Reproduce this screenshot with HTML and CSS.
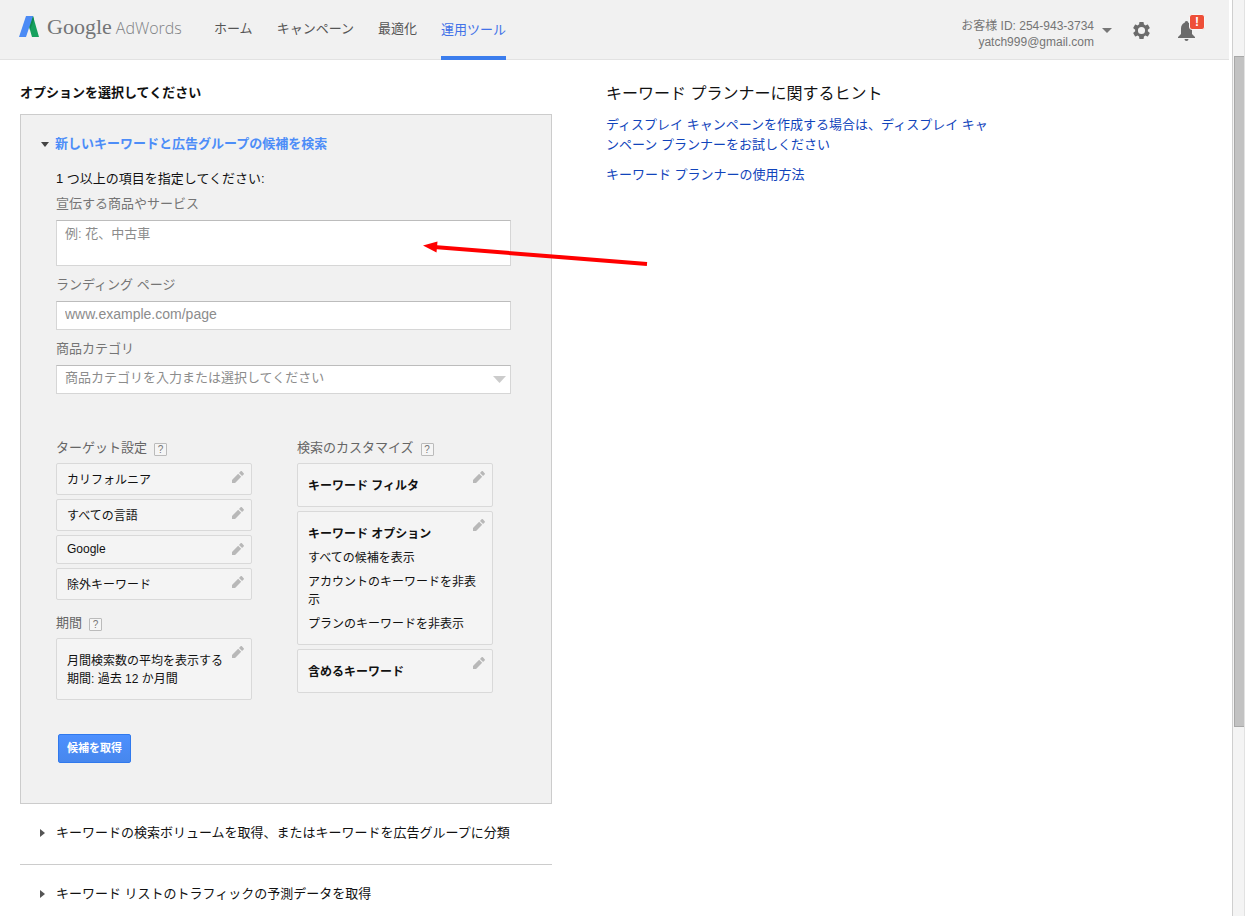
FILE: index.html
```html
<!DOCTYPE html>
<html lang="ja">
<head>
<meta charset="utf-8">
<meta name="viewport" content="width=device-width, initial-scale=1">
<title>Google AdWords</title>
<link rel="stylesheet" href="styles.css">
</head>
<body>
<svg class="sprite" aria-hidden="true">
  <symbol id="pencil" viewBox="0 0 18 18">
    <path d="M0 13.400V18h4.600L13.800 8.800 9.200 4.200zM17.500 5.100c.6-.6.6-1.300 0-1.900L14.800.5c-.6-.6-1.300-.6-1.900 0L10.500 2.900l4.600 4.600z"/>
  </symbol>
</svg>
<div class="shell">
  <div class="page">
    <header class="header">
      <a class="logo" href="#" aria-label="Google AdWords">
        <svg class="logo-mark" viewBox="0 0 20 21" aria-hidden="true">
          <path fill="#16a05d" d="M7 0h7l6 21h-7z"/>
          <path fill="#0f8a4d" d="M10.500 11 14 0l1 4-4 10z"/>
          <path fill="#4c8bf5" d="M7 0h7L7 21H0z"/>
        </svg>
        <span class="logo-google">Google</span>
        <span class="logo-product">AdWords</span>
      </a>
      <nav class="nav">
        <a href="#">ホーム</a>
        <a href="#">キャンペーン</a>
        <a href="#">最適化</a>
        <a class="active" href="#" aria-current="page">運用ツール</a>
      </nav>
      <div class="tools">
        <button class="account" type="button">
          <span class="account-text">
            <span>お客様 ID: 254-943-3734</span>
            <span>yatch999@gmail.com</span>
          </span>
          <svg class="account-caret" viewBox="0 0 10 5" aria-hidden="true"><path d="M0 0h10L5 5z"/></svg>
        </button>
        <button class="icon-button" type="button" aria-label="設定">
          <svg class="gear" viewBox="2 2 20 20" aria-hidden="true"><path fill-rule="evenodd" d="M19.430 12.980c.04-.32.070-.64.070-.98s-.03-.66-.07-.98l2.110-1.650c.19-.15.240-.42.120-.64l-2-3.460c-.12-.22-.39-.3-.61-.22l-2.490 1c-.52-.4-1.080-.73-1.690-.98l-.38-2.650A.488.488 0 0 0 14 2h-4c-.25 0-.46.180-.49.420l-.38 2.650c-.61.250-1.170.590-1.690.980l-2.490-1c-.23-.09-.49 0-.61.220l-2 3.460c-.13.220-.07.490.120.640l2.110 1.650c-.04.320-.07.650-.07.980s.03.660.070.980l-2.110 1.650c-.19.150-.24.420-.12.640l2 3.460c.12.220.39.300.610.220l2.490-1c.52.400 1.080.730 1.690.980l.38 2.650c.03.240.240.420.490.420h4c.25 0 .46-.18.490-.42l.38-2.650c.61-.25 1.170-.59 1.690-.98l2.490 1c.23.090.490 0 .61-.22l2-3.460c.12-.22.070-.49-.12-.64zM12 16.200a4.200 4.200 0 1 1 0-8.400 4.200 4.200 0 0 1 0 8.400z"/></svg>
        </button>
        <button class="icon-button" type="button" aria-label="通知">
          <svg class="bell" viewBox="0 0 17 20" aria-hidden="true"><path d="M8.500 0C7.400 0 6.700.7 6.700 1.800 4.300 2.600 3 4.800 3 7.500V13L0 16v1h17v-1l-3-3V7.500c0-2.700-1.300-4.900-3.700-5.700C10.300.7 9.600 0 8.500 0zM6.500 18a2 2 0 0 0 4 0z"/></svg>
          <span class="badge">!</span>
        </button>
      </div>
    </header>

    <main class="content">
      <section class="options">
        <h1 class="section-title">オプションを選択してください</h1>
        <form class="panel">
          <h2 class="panel-title">
            <button type="button" aria-expanded="true">
              <svg class="caret-down" viewBox="0 0 8 5" aria-hidden="true"><path d="M0 0h8L4 5z"/></svg>新しいキーワードと広告グループの候補を検索
            </button>
          </h2>
          <p class="lead">1 つ以上の項目を指定してください:</p>
          <div class="field">
            <label for="product">宣伝する商品やサービス</label>
            <textarea id="product" placeholder="例: 花、中古車"></textarea>
          </div>
          <div class="field">
            <label for="landing">ランディング ページ</label>
            <input id="landing" type="text" placeholder="www.example.com/page">
          </div>
          <div class="field">
            <label for="category">商品カテゴリ</label>
            <div class="select-wrap">
              <select id="category"><option>商品カテゴリを入力または選択してください</option></select>
              <svg class="select-caret" viewBox="0 0 13 7" aria-hidden="true"><path d="M0 0h13L6.500 7z"/></svg>
            </div>
          </div>

          <div class="settings">
            <div class="settings-column">
              <section class="group">
                <h3 class="group-title">ターゲット設定 <button class="help" type="button">?</button></h3>
                <div class="card">カリフォルニア<button class="edit" type="button" aria-label="編集"><svg aria-hidden="true"><use href="#pencil"/></svg></button></div>
                <div class="card">すべての言語<button class="edit" type="button" aria-label="編集"><svg aria-hidden="true"><use href="#pencil"/></svg></button></div>
                <div class="card card-latin">Google<button class="edit" type="button" aria-label="編集"><svg aria-hidden="true"><use href="#pencil"/></svg></button></div>
                <div class="card">除外キーワード<button class="edit" type="button" aria-label="編集"><svg aria-hidden="true"><use href="#pencil"/></svg></button></div>
              </section>
              <section class="group">
                <h3 class="group-title">期間 <button class="help" type="button">?</button></h3>
                <div class="card card-tall">
                  <p>月間検索数の平均を表示する<br>期間: 過去 12 か月間</p>
                  <button class="edit" type="button" aria-label="編集"><svg aria-hidden="true"><use href="#pencil"/></svg></button>
                </div>
              </section>
            </div>
            <div class="settings-column">
              <section class="group">
                <h3 class="group-title">検索のカスタマイズ <button class="help" type="button">?</button></h3>
                <div class="card card-tall">
                  <h4>キーワード フィルタ</h4>
                  <button class="edit" type="button" aria-label="編集"><svg aria-hidden="true"><use href="#pencil"/></svg></button>
                </div>
                <div class="card card-tall">
                  <h4>キーワード オプション</h4>
                  <p>すべての候補を表示</p>
                  <p>アカウントのキーワードを非表示</p>
                  <p>プランのキーワードを非表示</p>
                  <button class="edit" type="button" aria-label="編集"><svg aria-hidden="true"><use href="#pencil"/></svg></button>
                </div>
                <div class="card card-tall">
                  <h4>含めるキーワード</h4>
                  <button class="edit" type="button" aria-label="編集"><svg aria-hidden="true"><use href="#pencil"/></svg></button>
                </div>
              </section>
            </div>
          </div>
          <button class="submit" type="submit">候補を取得</button>
        </form>

        <h2 class="collapsed">
          <button type="button" aria-expanded="false"><svg class="caret-right" viewBox="0 0 5 8" aria-hidden="true"><path d="M0 0l5 4-5 4z"/></svg>キーワードの検索ボリュームを取得、またはキーワードを広告グループに分類</button>
        </h2>
        <h2 class="collapsed">
          <button type="button" aria-expanded="false"><svg class="caret-right" viewBox="0 0 5 8" aria-hidden="true"><path d="M0 0l5 4-5 4z"/></svg>キーワード リストのトラフィックの予測データを取得</button>
        </h2>
      </section>

      <aside class="tips">
        <h2>キーワード プランナーに関するヒント</h2>
        <p><a href="#">ディスプレイ キャンペーンを作成する場合は、ディスプレイ キャンペーン プランナーをお試しください</a></p>
        <p><a href="#">キーワード プランナーの使用方法</a></p>
      </aside>
      <svg class="pointer" viewBox="0 0 224 26" aria-hidden="true">
        <path fill="none" stroke="#f00" stroke-width="4" d="M10 7 223 24"/>
        <path fill="#f00" d="M-1 5.500 13.500 1.500 12.500 12.500z"/>
      </svg>
    </main>
  </div>
  <div class="scrollbar" aria-hidden="true"><div class="thumb"></div></div>
</div>
</body>
</html>
```

FILE: styles.css
```css
* {
  box-sizing: border-box;
}

body,
h1,
h2,
h3,
h4,
p {
  margin: 0;
}

body {
  background: #fff;
  color: #111;
  font: 13px/20px "Liberation Sans", "Noto Sans CJK JP", sans-serif;
}

button,
input,
select,
textarea {
  font: inherit;
  color: inherit;
}

button {
  padding: 0;
  border: 0;
  background: none;
  cursor: pointer;
}

a {
  color: #1144bb;
  text-decoration: none;
}

svg {
  display: block;
  flex: none;
}

.sprite {
  position: absolute;
  width: 0;
  height: 0;
}

.shell {
  display: flex;
  gap: 3px;
  height: 100vh;
  overflow: hidden;
}

.page {
  flex: 1;
  min-width: 0;
}

/* Header */
.header {
  display: flex;
  height: 60px;
  padding: 0 24px 0 19px;
  background: #f1f1f1;
  border-bottom: 1px solid #e2e2e2;
}

.logo {
  display: flex;
  align-items: center;
  width: 195px;
  padding-bottom: 5px;
}

.logo-mark {
  width: 20px;
  height: 21px;
  margin: 0 8px 2px 0;
}

.logo-google {
  margin-right: 4px;
  color: #737577;
  font-family: "Liberation Serif", serif;
  font-size: 22px;
}

.logo-product {
  padding-top: 2px;
  color: #808285;
  font-family: "Open Sans", sans-serif;
  font-size: 16px;
  font-weight: 300;
}

.nav {
  display: flex;
  gap: 24px;
}

.nav a {
  height: 60px;
  padding-top: 19px;
  color: #555;
  white-space: nowrap;
}

.nav .active {
  padding-top: 20px;
  color: #4272e8;
  border-bottom: 4px solid #3b7ded;
}

.tools {
  display: flex;
  align-items: center;
  margin-left: auto;
}

.account {
  display: flex;
  align-items: center;
  gap: 8px;
  margin: 8px 21px 0 0;
  color: #757575;
  font-size: 12px;
  line-height: 16px;
  text-align: right;
}

.account-text span {
  display: block;
}

.account-caret {
  width: 10px;
  height: 5px;
  margin-bottom: 6px;
  fill: #777;
}

.icon-button {
  position: relative;
  width: 17px;
  margin: 2px 28px 0 0;
}

.icon-button:last-child {
  margin-right: 10px;
}

.gear {
  width: 17px;
  height: 17px;
  fill: #6b6b6b;
}

.bell {
  width: 17px;
  height: 20px;
  fill: #6b6b6b;
}

.badge {
  position: absolute;
  top: -7px;
  right: -10px;
  width: 16px;
  height: 16px;
  border: 1px solid #f8f8f8;
  border-radius: 3px;
  background: #ee4f38;
  color: #fff;
  font-size: 12px;
  font-weight: bold;
  line-height: 14px;
  text-align: center;
}

/* Content */
.content {
  position: relative;
  display: grid;
  grid-template-columns: minmax(0, 532px) minmax(0, 385px);
  gap: 54px;
  padding: 23px 20px 0;
}

.section-title {
  margin-bottom: 11px;
  font-size: 13px;
}

.panel {
  padding: 19px 40px 40px 35px;
  background: #f1f1f1;
  border: 1px solid #ccc;
}

.panel-title {
  margin-left: -15px;
  color: #4d8df8;
  font-size: 13px;
}

.panel-title button {
  display: flex;
  align-items: center;
  gap: 6px;
  text-align: left;
}

.caret-down {
  width: 8px;
  height: 5px;
  fill: #444;
}

.lead {
  margin: 15px 0 5px;
}

.field {
  display: flex;
  flex-direction: column;
  gap: 6px;
  margin-bottom: 9px;
  color: #757575;
}

.field input,
.field select,
.field textarea {
  display: block;
  width: 100%;
  height: 29px;
  margin: 0;
  padding: 0 8px;
  border: 1px solid #d6d6d6;
  border-top-color: #bcbcbc;
  border-radius: 0;
  background: #fff;
  appearance: none;
  color: #8c8c8c;
}

.field textarea {
  height: 46px;
  padding-top: 3px;
  resize: none;
}

.field input {
  padding-bottom: 3px;
  font-size: 14px;
}

.field select {
  padding-bottom: 3px;
}

.field ::placeholder {
  color: #8c8c8c;
}

.select-wrap {
  position: relative;
}

.select-caret {
  position: absolute;
  top: 11px;
  right: 5px;
  width: 13px;
  height: 7px;
  fill: #ccc;
  pointer-events: none;
}

.settings {
  display: grid;
  grid-template-columns: repeat(2, minmax(0, 196px));
  gap: 45px;
  margin-top: 44px;
  font-size: 12px;
  line-height: 18px;
}

.group + .group {
  margin-top: 13px;
}

.group-title {
  display: flex;
  align-items: center;
  gap: 7px;
  margin-bottom: 5px;
  color: #666;
  font-size: 13px;
  font-weight: normal;
  line-height: 20px;
}

.help {
  width: 13px;
  height: 13px;
  margin-top: 3px;
  border: 1px solid #bbb;
  border-radius: 1px;
  background: #f5f5f5;
  color: #777;
  font-size: 10px;
  line-height: 11px;
}

.card {
  position: relative;
  padding: 7px 10px 5px;
  border: 1px solid #d9d9d9;
  border-radius: 2px;
  background: #f4f4f4;
}

.card + .card {
  margin-top: 4px;
}

.card-latin {
  padding: 6px 10px;
  line-height: 15px;
}

.card-tall {
  padding: 13px 10px 11px;
}

.card h4 {
  font-size: 12px;
}

.card h4 + p,
.card p + p {
  margin-top: 6px;
}

.edit {
  position: absolute;
  top: 7px;
  right: 7px;
}

.edit svg {
  width: 12px;
  height: 12px;
  fill: #b8b8b8;
}

.submit {
  display: block;
  height: 29px;
  margin: 34px 0 0 2px;
  padding: 0 8px 2px;
  border: 1px solid #3079ed;
  border-radius: 2px;
  background: linear-gradient(#4d90fe, #4787ed);
  color: #fff;
  font-size: 11px;
  font-weight: bold;
}

.collapsed {
  padding: 19px 20px 21px;
  border-bottom: 1px solid #ccc;
  font-size: 13px;
  font-weight: normal;
}

.collapsed button {
  display: flex;
  align-items: center;
  gap: 11px;
  text-align: left;
}

.caret-right {
  width: 5px;
  height: 8px;
  fill: #555;
}

/* Tips */
.tips h2 {
  padding-top: 1px;
  margin-bottom: 11px;
  font-size: 16px;
  font-weight: normal;
}

.tips p + p {
  margin-top: 10px;
}

.pointer {
  position: absolute;
  top: 180px;
  left: 424px;
  width: 224px;
  height: 26px;
  overflow: visible;
  pointer-events: none;
}

/* Scroll track */
.scrollbar {
  width: 13px;
  padding: 56px 0 0 1px;
  border-left: 1px solid #cfcfcf;
  border-right: 1px solid #e2e2e2;
  background: #f4f4f4;
}

.thumb {
  height: 78%;
  border: 1px solid #a8a8a8;
  border-right: 0;
  background: #c2c2c2;
}
```
